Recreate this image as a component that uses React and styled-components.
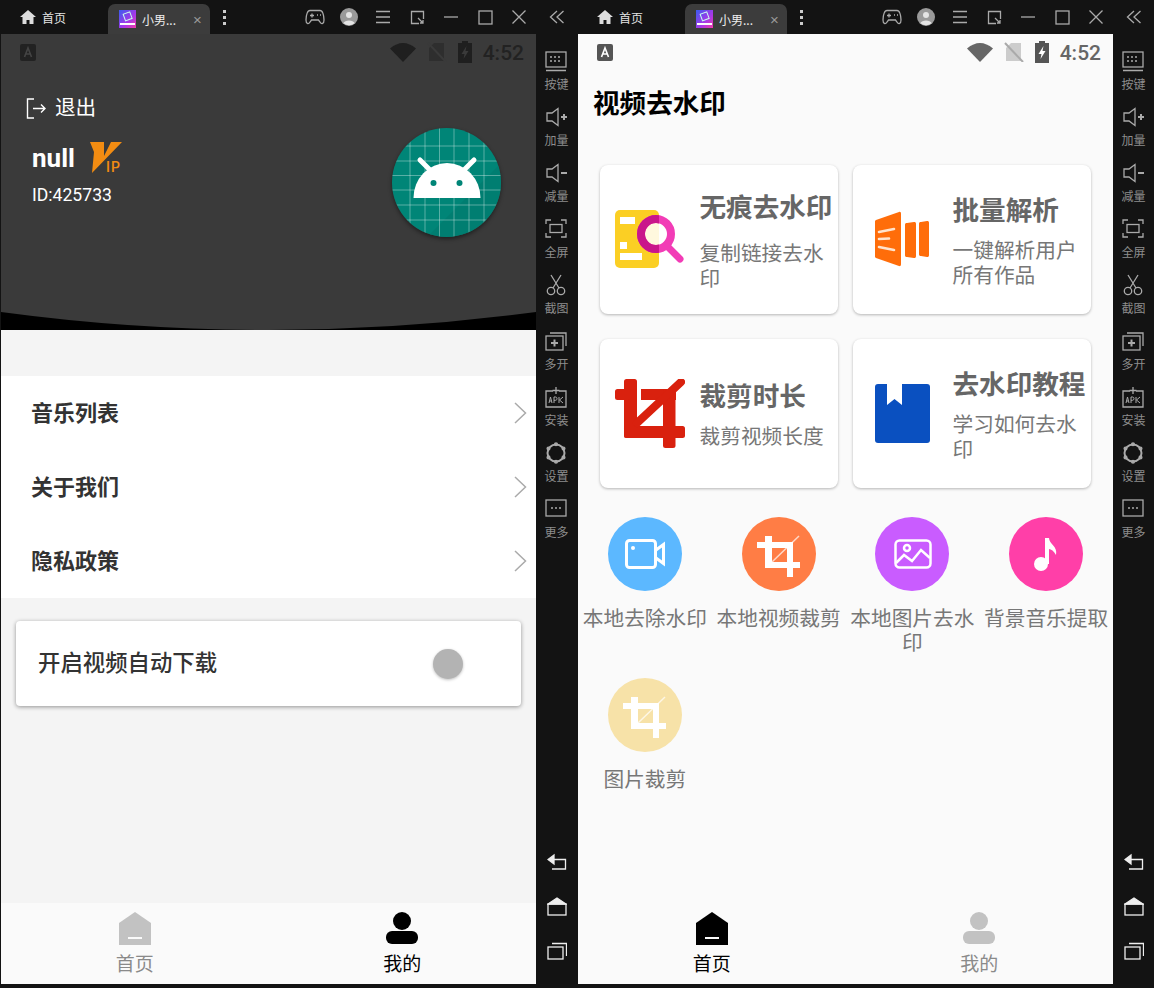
import React from 'react';
import styled, { createGlobalStyle } from 'styled-components';

const GlobalStyle = createGlobalStyle`
    html, body {
        margin: 0;
        padding: 0;
        background: #131313;
        overflow: hidden;
    }
    * {
        box-sizing: border-box;
    }
`

const cjk = `"Noto Sans CJK SC", "Noto Sans", sans-serif`

const Page = styled.div`
    display: flex;
    width: 1154px;
    height: 988px;
    font-family: ${cjk};
`

const Window = styled.section`
    width: 577px;
    height: 988px;
    display: flex;
    flex-direction: column;
    background: #131313;
`

const TitleBar = styled.header`
    height: 34px;
    flex: none;
    display: flex;
    align-items: center;
    color: #ddd;
`

const HomeTab = styled.div`
    width: 108px;
    padding-left: 20px;
    display: flex;
    align-items: center;
    gap: 6px;
    font-size: 12px;
    color: #e4e4e4;
`

const ActiveTab = styled.div`
    width: 102px;
    height: 30px;
    margin-top: 4px;
    padding-left: 11px;
    display: flex;
    align-items: center;
    gap: 6px;
    font-size: 12px;
    color: #eee;
    background: #3c3c3c;
    border-radius: 7px 7px 0 0;
`

const TabName = styled.span`
    width: 45px;
`

const TabClose = styled.span`
    font-size: 15px;
    line-height: 1;
    color: #999;
    font-family: "Liberation Sans", sans-serif;
`

const Dots = styled.div`
    width: 28px;
    display: flex;
    flex-direction: column;
    align-items: center;
    gap: 3px;
    span {
        width: 3px;
        height: 3px;
        background: #ccc;
    }
`

const WinControls = styled.div`
    margin-left: auto;
    display: flex;
    width: 238px;
`

const WinButton = styled.div`
    width: 34px;
    height: 34px;
    display: flex;
    align-items: center;
    justify-content: center;
`

const CollapseCell = styled.div`
    width: 41px;
    height: 34px;
    display: flex;
    align-items: center;
    justify-content: center;
`

const Body = styled.div`
    flex: 1;
    min-height: 0;
    display: flex;
    padding-left: 1px;
`

const Phone = styled.main`
    width: 535px;
    height: 950px;
    display: flex;
    flex-direction: column;
    background: ${p => p.$bg};
`

const Rail = styled.aside`
    width: 41px;
    padding: 16px 0 27px;
    display: flex;
    flex-direction: column;
    justify-content: space-between;
    align-items: center;
`

const RailTools = styled.div`
    display: flex;
    flex-direction: column;
    align-items: center;
`

const RailTool = styled.div`
    height: 56px;
    display: flex;
    flex-direction: column;
    align-items: center;
    gap: 4px;
    font-size: 12px;
    line-height: 16px;
    color: #8d8d8d;
`

const RailNav = styled.div`
    display: flex;
    flex-direction: column;
    align-items: center;
    gap: 24px;
`

const StatusBar = styled.div`
    height: 36px;
    flex: none;
    padding: 0 12px 0 19px;
    display: flex;
    align-items: center;
    color: ${p => p.$color};
`

const StatusIcons = styled.div`
    margin-left: auto;
    display: flex;
    align-items: center;
    gap: 11px;
`

const Clock = styled.span`
    padding-top: 3px;
    font-family: Roboto, sans-serif;
    font-weight: 500;
    font-size: 21px;
    line-height: 33px;
`

const BottomNav = styled.nav`
    height: 81px;
    flex: none;
    margin-top: auto;
    display: flex;
    background: #fafafa;
`

const NavItem = styled.div`
    flex: 1;
    padding-top: 9px;
    display: flex;
    flex-direction: column;
    align-items: center;
    gap: 4px;
    font-size: 19px;
    line-height: 28px;
    color: ${p => (p.$active ? '#000' : '#8a8a8a')};
`

/* my page */
const Header = styled.div`
    flex: none;
    background: #3a3a3a;
`

const HeaderMain = styled.div`
    height: 242px;
    padding: 23px 35px 0 25px;
    display: flex;
    justify-content: space-between;
    align-items: flex-start;
    color: #fff;
`

const Logout = styled.div`
    height: 30px;
    display: flex;
    align-items: center;
    gap: 8px;
    font-size: 20.6px;
    line-height: 26px;
    span {
        padding-bottom: 4px;
    }
`

const NameRow = styled.div`
    margin: 19px 0 0 6px;
    display: flex;
    align-items: center;
    gap: 14px;
    height: 31px;
`

const Name = styled.span`
    font-family: Roboto, sans-serif;
    font-weight: 700;
    font-size: 26px;
`

const UserId = styled.div`
    margin: 11px 0 0 6px;
    font-family: Roboto, sans-serif;
    font-size: 17.6px;
    line-height: 22px;
`

const Avatar = styled.svg`
    width: 109px;
    height: 109px;
    margin-top: 35px;
    border-radius: 50%;
    box-shadow: 0 2px 4px rgba(0, 0, 0, 0.45);
`

const Curve = styled.svg`
    display: block;
    width: 535px;
    height: 18px;
`

const MenuList = styled.div`
    margin-top: 46px;
    background: #fff;
`

const MenuRow = styled.div`
    height: 74px;
    padding: 0 9px 0 30px;
    display: flex;
    align-items: center;
    justify-content: space-between;
    font-size: 22px;
    font-weight: 700;
    color: #333;
    span {
        padding-bottom: 4px;
    }
`

const SwitchCard = styled.div`
    height: 85px;
    margin: 23px 15px 0;
    padding: 0 58px 0 22px;
    display: flex;
    align-items: center;
    justify-content: space-between;
    background: #fff;
    border-radius: 4px;
    box-shadow: 0 1px 4px rgba(0, 0, 0, 0.4);
    font-size: 22.4px;
    font-weight: 500;
    color: #333;
    span:first-child {
        padding-bottom: 5px;
    }
`

const Thumb = styled.i`
    width: 30px;
    height: 30px;
    border-radius: 50%;
    background: #b3b3b3;
    box-shadow: 0 1px 3px rgba(0, 0, 0, 0.25);
`

/* home page */
const PageTitle = styled.h1`
    margin: 14px 0 0 15px;
    font-size: 26.6px;
    line-height: 36px;
    font-weight: 700;
    color: #000;
`

const CardGrid = styled.div`
    margin: 45px 0 0 22px;
    display: grid;
    grid-template-columns: 238px 238px;
    grid-auto-rows: 149px;
    column-gap: 15px;
    row-gap: 25px;
`

const Card = styled.div`
    padding: 0 4px 0 15px;
    display: flex;
    align-items: center;
    gap: 15px;
    background: #fff;
    border-radius: 8px;
    box-shadow: 0 1px 3px rgba(0, 0, 0, 0.28);
`

const CardIcon = styled.svg`
    width: 70px;
    height: 70px;
    flex: none;
`

const CardText = styled.div`
    flex: 1;
    min-width: 0;
`

const CardTitle = styled.div`
    font-size: 26.6px;
    line-height: 32px;
    font-weight: 700;
    color: #666;
    white-space: nowrap;
    margin: 0 0 ${p => p.$gap}px -0.5px;
`

const CardSub = styled.div`
    font-size: 20.7px;
    line-height: 24.5px;
    color: #777;
    margin-left: -0.5px;
`

const ToolGrid = styled.div`
    margin-top: 29px;
    display: grid;
    grid-template-columns: repeat(4, 1fr);
    row-gap: 24px;
`

const Tool = styled.div`
    display: flex;
    flex-direction: column;
    align-items: center;
    gap: 14px;
    text-align: center;
    font-size: 20.7px;
    line-height: 24px;
    color: #777;
    min-height: 137px;
`

const ToolCircle = styled.div`
    width: 74px;
    height: 74px;
    flex: none;
    border-radius: 50%;
    background: ${p => p.$color};
    svg {
        display: block;
    }
`

/* icons */
const Stroke = ({ w = 24, h = 24, children, color = '#aaa', sw = 1.3 }) => (
    <svg width={w} height={h} viewBox={`0 0 ${w} ${h}`} fill="none" stroke={color} strokeWidth={sw}>
        {children}
    </svg>
)

const HomeGlyph = () => (
    <svg width="16" height="14" viewBox="0 0 16 14">
        <path d="M8 0L16 7H13.5V14H9.5V10H6.5V14H2.5V7H0Z" fill="#ddd" />
    </svg>
)

const TabLogo = () => (
    <svg width="17" height="18" viewBox="0 0 17 18">
        <defs>
            <linearGradient id="tablogo" x1="0" y1="0" x2="1" y2="1">
                <stop offset="0" stopColor="#3a5cf0" />
                <stop offset="0.6" stopColor="#a838e8" />
                <stop offset="1" stopColor="#f03ca8" />
            </linearGradient>
        </defs>
        <rect width="17" height="18" fill="url(#tablogo)" />
        <rect x="5" y="3" width="7" height="7" fill="none" stroke="#cfe" strokeWidth="1" transform="rotate(-20 8 6)" />
        <rect x="1" y="13" width="15" height="2" fill="#fff" />
    </svg>
)

const Gamepad = () => (
    <Stroke w="20" h="16">
        <path d="M5 1.5H15C17.5 1.5 19 6 19 11C19 15 16.5 15.5 15 13L13.5 11H6.5L5 13C3.5 15.5 1 15 1 11C1 6 2.5 1.5 5 1.5Z" />
        <path d="M5 6.5H9M7 4.5V8.5M12 6H13M15 6H16" />
    </Stroke>
)

const AccountDot = () => (
    <svg width="18" height="18" viewBox="0 0 18 18">
        <circle cx="9" cy="9" r="9" fill="#9a9a9a" />
        <circle cx="9" cy="7" r="3" fill="#e4e4e4" />
        <path d="M3.5 15C4.5 11.5 13.5 11.5 14.5 15C11.5 18 6.5 18 3.5 15Z" fill="#e4e4e4" />
    </svg>
)

const MenuLines = () => (
    <Stroke w="16" h="14">
        <path d="M1 1.5H15M1 7H15M1 12.5H15" />
    </Stroke>
)

const ResizeBox = () => (
    <Stroke w="15" h="15">
        <path d="M9 13.5H1.5V1.5H13.5V9" />
        <path d="M8 8L13 13M13 10V13H10" />
    </Stroke>
)

const MinLine = () => (
    <Stroke w="16" h="4">
        <path d="M1 2H15" />
    </Stroke>
)

const MaxBox = () => (
    <Stroke w="15" h="15">
        <rect x="1" y="1" width="13" height="13" />
    </Stroke>
)

const CloseX = () => (
    <Stroke w="16" h="16">
        <path d="M1.5 1.5L14.5 14.5M14.5 1.5L1.5 14.5" />
    </Stroke>
)

const Chevrons = () => (
    <Stroke w="16" h="14">
        <path d="M8 1L1.5 7L8 13M14.5 1L8 7L14.5 13" />
    </Stroke>
)

const railIcons = {
    keys: (
        <>
            <rect x="2" y="2" width="20" height="15" />
            <path d="M6 7H8M10 7H12M14 7H16M6 11H8M10 11H12M14 11H16M2 20.5H22" />
        </>
    ),
    volUp: (
        <>
            <path d="M3 7H8L14 2.5V19.5L8 15H3Z" />
            <path d="M17 11H23M20 8V14" strokeWidth="2" />
        </>
    ),
    volDown: (
        <>
            <path d="M3 7H8L14 2.5V19.5L8 15H3Z" />
            <path d="M17 11H23" strokeWidth="2" />
        </>
    ),
    full: (
        <>
            <path d="M2 6V2H7M17 2H22V6M2 15V19H7M17 19H22V15" />
            <rect x="6" y="6.5" width="12" height="8" />
        </>
    ),
    cut: (
        <>
            <circle cx="7" cy="17" r="3.7" />
            <circle cx="17" cy="17" r="3.7" />
            <path d="M9 14L17 1M15 14L7 1" />
        </>
    ),
    multi: (
        <>
            <rect x="2" y="6" width="17" height="14" />
            <path d="M6 3H22V16" />
            <path d="M7 13H14M10.5 9.5V16.5" strokeWidth="2" />
        </>
    ),
    apk: (
        <>
            <path d="M9 5H2V21H22V5H15" />
            <path d="M12 1V8M8.5 4.5H15.5" />
            <path d="M5 17L6.5 11L8 17M5.6 15H7.4M10 17V11H11.5C13.5 11 13.5 14.3 11.5 14.3H10M15 11V17M19 11L15.5 14L19 17" strokeWidth="1" />
        </>
    ),
    gear: (
        <>
            <circle cx="12" cy="11" r="8.5" strokeWidth="2" />
            <circle cx="12" cy="2.300" r="1.4" fill="#aaa" />
            <circle cx="12" cy="19.700" r="1.4" fill="#aaa" />
            <circle cx="4.500" cy="6.600" r="1.4" fill="#aaa" />
            <circle cx="19.500" cy="6.600" r="1.4" fill="#aaa" />
            <circle cx="4.500" cy="15.400" r="1.4" fill="#aaa" />
            <circle cx="19.500" cy="15.400" r="1.4" fill="#aaa" />
        </>
    ),
    more: (
        <>
            <rect x="2" y="2" width="20" height="16" />
            <path d="M7 10H9M11 10H13M15 10H17" strokeWidth="1.6" />
        </>
    ),
}

const tools = [
    ['keys', '按键'],
    ['volUp', '加量'],
    ['volDown', '减量'],
    ['full', '全屏'],
    ['cut', '截图'],
    ['multi', '多开'],
    ['apk', '安装'],
    ['gear', '设置'],
    ['more', '更多'],
]

const SideRail = () => (
    <Rail>
        <RailTools>
            {tools.map(([icon, label]) => (
                <RailTool key={icon}>
                    <Stroke w="24" h="22">{railIcons[icon]}</Stroke>
                    <span>{label}</span>
                </RailTool>
            ))}
        </RailTools>
        <RailNav>
            <svg width="20" height="20" viewBox="0 0 20 20" fill="none" stroke="#eee" strokeWidth="1.3">
                <path d="M7 2L1 6.5L7 11Z" fill="#eee" />
                <path d="M7 6.5H18.5V16H5" />
            </svg>
            <svg width="20" height="20" viewBox="0 0 20 20" fill="none" stroke="#eee" strokeWidth="1.3">
                <path d="M1 7L10 1L19 7Z" fill="#eee" />
                <rect x="1" y="7" width="18" height="11" />
            </svg>
            <svg width="20" height="20" viewBox="0 0 20 20" fill="none" stroke="#eee" strokeWidth="1.3">
                <rect x="1" y="6" width="15" height="12" />
                <path d="M5 2.5H19.5V15" />
            </svg>
        </RailNav>
    </Rail>
)

const WindowTop = () => (
    <TitleBar>
        <HomeTab>
            <HomeGlyph />
            <span>首页</span>
        </HomeTab>
        <ActiveTab>
            <TabLogo />
            <TabName>小男...</TabName>
            <TabClose>×</TabClose>
        </ActiveTab>
        <Dots>
            <span />
            <span />
            <span />
        </Dots>
        <WinControls>
            <WinButton><Gamepad /></WinButton>
            <WinButton><AccountDot /></WinButton>
            <WinButton><MenuLines /></WinButton>
            <WinButton><ResizeBox /></WinButton>
            <WinButton><MinLine /></WinButton>
            <WinButton><MaxBox /></WinButton>
            <WinButton><CloseX /></WinButton>
        </WinControls>
        <CollapseCell><Chevrons /></CollapseCell>
    </TitleBar>
)

const Status = ({ color, box, letter, wifi, sim, slash, batt, bolt }) => (
    <StatusBar $color={color}>
        <svg width="16" height="17" viewBox="0 0 16 17">
            <rect width="16" height="17" rx="2" fill={box} />
            <path d="M4.5 13L8 4L11.5 13M5.8 10H10.2" fill="none" stroke={letter} strokeWidth="1.6" />
        </svg>
        <StatusIcons>
            <svg width="26" height="20" viewBox="0 0 26 20">
                <path d="M0 6.5Q13 -4.5 26 6.5L13 20Z" fill={wifi} />
            </svg>
            <svg width="20" height="20" viewBox="0 0 20 20">
                <path d="M7 1H17V19H2V6Z" fill={sim} />
                <path d="M1 1L19 20" stroke={slash} strokeWidth="2" />
            </svg>
            <svg width="14" height="22" viewBox="0 0 14 22">
                <path d="M4 0H10V2H14V22H0V2H4Z" fill={batt} />
                <path d="M8.5 5L3.5 13H6.5L5.5 18L10.5 10H7.5Z" fill={bolt} />
            </svg>
            <Clock>4:52</Clock>
        </StatusIcons>
    </StatusBar>
)

const HomeNavIcon = ({ color }) => (
    <svg width="32" height="33" viewBox="0 0 32 33">
        <path d="M16 0L32 11V33H0V11Z" fill={color} />
        <rect x="9" y="25" width="14" height="2" fill="#fafafa" />
    </svg>
)

const PersonNavIcon = ({ color }) => (
    <svg width="32" height="33" viewBox="0 0 32 33">
        <circle cx="16" cy="9" r="9" fill={color} />
        <rect x="0" y="19" width="32" height="13" rx="6" fill={color} />
    </svg>
)

const Tabs = ({ active }) => (
    <BottomNav>
        <NavItem $active={active === 'home'}>
            <HomeNavIcon color={active === 'home' ? '#000' : '#c2c2c2'} />
            <span>首页</span>
        </NavItem>
        <NavItem $active={active === 'me'}>
            <PersonNavIcon color={active === 'me' ? '#000' : '#c2c2c2'} />
            <span>我的</span>
        </NavItem>
    </BottomNav>
)

const AndroidAvatar = () => (
    <Avatar viewBox="0 0 109 109">
        <rect width="109" height="109" fill="#008577" />
        <path d="M109 35L35 109H109Z" fill="#00776b" opacity="0.5" />
        <path
            d="M18 0V109M33 0V109M47.500 0V109M62 0V109M77 0V109M92 0V109M0 18H109M0 33H109M0 47.500H109M0 62H109M0 77H109M0 92H109"
            stroke="#fff"
            strokeOpacity="0.35"
            strokeWidth="1"
        />
        <path d="M21.500 70A33.500 35 0 0 1 88.500 70Z" fill="#fff" />
        <path d="M28 32L39 43M82 32L71 43" stroke="#fff" strokeWidth="5" strokeLinecap="round" />
        <circle cx="41.500" cy="55" r="3" fill="#008577" />
        <circle cx="67.500" cy="55" r="3" fill="#008577" />
    </Avatar>
)

const VipMark = () => (
    <svg width="36" height="31" viewBox="0 0 36 31" overflow="visible">
        <path d="M1 0H15V14L22 0H33L3 31L5 10Z" fill="#f28c12" />
        <text x="17" y="30" fontFamily="Roboto, sans-serif" fontSize="14" fontWeight="500" letterSpacing="1" fill="#f28c12">IP</text>
    </svg>
)

const Chevron = () => (
    <Stroke w="14" h="24" color="#aaa" sw="1.5">
        <path d="M2 2L12.500 12L2 22" />
    </Stroke>
)

const MinePage = () => (
    <Phone $bg="#f4f4f4">
        <Header>
            <Status color="#222" box="#222" letter="#444" wifi="#1f1f1f" sim="#2e2e2e" slash="#3a3a3a" batt="#1f1f1f" bolt="#3a3a3a" />
            <HeaderMain>
                <div>
                    <Logout>
                        <svg width="21" height="21" viewBox="0 0 21 21" fill="none" stroke="#fff" strokeWidth="1.4">
                            <path d="M8 1H1.500V20H8" />
                            <path d="M7 10.500H19M15 6.500L19 10.500L15 14.500" />
                        </svg>
                        <span>退出</span>
                    </Logout>
                    <NameRow>
                        <Name>null</Name>
                        <VipMark />
                    </NameRow>
                    <UserId>ID:425733</UserId>
                </div>
                <AndroidAvatar />
            </HeaderMain>
            <Curve viewBox="0 0 535 18">
                <path d="M0 0Q267.500 36 535 0V18H0Z" fill="#000" />
            </Curve>
        </Header>
        <MenuList>
            <MenuRow><span>音乐列表</span><Chevron /></MenuRow>
            <MenuRow><span>关于我们</span><Chevron /></MenuRow>
            <MenuRow><span>隐私政策</span><Chevron /></MenuRow>
        </MenuList>
        <SwitchCard>
            <span>开启视频自动下载</span>
            <Thumb />
        </SwitchCard>
        <Tabs active="me" />
    </Phone>
)

const SearchDocIcon = () => (
    <CardIcon viewBox="0 0 70 70">
        <defs>
            <clipPath id="docclip">
                <rect x="0" y="5" width="44" height="58" rx="5" />
            </clipPath>
        </defs>
        <rect x="0" y="5" width="44" height="58" rx="5" fill="#fbcf24" />
        <path d="M5 12H20V19H5ZM5 37H12V44H5ZM5 48H27V55H5Z" fill="#fff" />
        <path d="M52 41L65 54" stroke="#f23cb6" strokeWidth="7" strokeLinecap="round" />
        <circle cx="41" cy="29" r="15" fill="#fff" fillOpacity="0.85" stroke="#f23cb6" strokeWidth="8" />
        <circle cx="41" cy="29" r="15" fill="none" stroke="#c9168b" strokeWidth="8" clipPath="url(#docclip)" />
    </CardIcon>
)

const BatchIcon = () => (
    <CardIcon viewBox="0 0 70 70">
        <path d="M8 15L31 7C32.500 6.500 33 7.500 33 9V59C33 60.500 32.500 61.500 31 61L8 53C7 52.500 7 52 7 51V17C7 16 7 15.500 8 15Z" fill="#ff6d0a" />
        <path d="M39 18L46 17C47.500 17 48 17.500 48 19V51C48 52.500 47.500 53 46 53L39 52C37.500 52 37 51.500 37 50V20C37 18.500 37.500 18 39 18Z" fill="#ff6d0a" />
        <path d="M53 17L59 16C60.500 16 61 16.500 61 18V50C61 51.500 60.500 52 59 52L53 51C51.500 51 51 50.500 51 49V19C51 17.500 51.500 17 53 17Z" fill="#ff6d0a" />
        <path d="M11 27L26 24M11 34L21 33.500M11 42L26 45" stroke="#ffe3cc" strokeWidth="2.600" strokeLinecap="round" />
    </CardIcon>
)

const RedCropIcon = () => (
    <CardIcon viewBox="0 0 70 70">
        <g fill="#d9210e">
            <rect x="9" y="0" width="13" height="59" rx="2.500" />
            <rect x="0" y="10" width="16" height="11" rx="2.500" />
            <rect x="26" y="10" width="35" height="11" />
            <rect x="48" y="10" width="12.500" height="59" rx="2.500" />
            <rect x="9" y="47" width="61" height="12" rx="2.500" />
        </g>
        <path d="M22 44L66 3" stroke="#d9210e" strokeWidth="8" strokeLinecap="round" />
    </CardIcon>
)

const BookIcon = () => (
    <CardIcon viewBox="0 0 70 70">
        <rect x="7" y="5" width="55" height="59" rx="3" fill="#0a50c0" />
        <path d="M19 5H34V26L26.500 20L19 26Z" fill="#fff" />
    </CardIcon>
)

const CropGlyph = () => (
    <svg width="74" height="74" viewBox="0 0 74 74">
        <g fill="#fff">
            <rect x="23" y="19" width="7" height="32" />
            <rect x="15" y="25" width="36" height="6" />
            <rect x="45" y="25" width="6" height="35" />
            <rect x="23" y="45" width="35" height="6" />
        </g>
        <path d="M30 45L57 19" stroke="#fff" strokeOpacity="0.7" strokeWidth="1.500" />
    </svg>
)

const VideoGlyph = () => (
    <svg width="74" height="74" viewBox="0 0 74 74" fill="none" stroke="#fff" strokeWidth="3">
        <rect x="18.500" y="23.500" width="29" height="27" rx="3" />
        <path d="M48 33L55.500 27.500V46.500L48 41" />
        <circle cx="25" cy="31" r="2" fill="#fff" stroke="none" />
    </svg>
)

const PictureGlyph = () => (
    <svg width="74" height="74" viewBox="0 0 74 74" fill="none" stroke="#fff" strokeWidth="2.500">
        <rect x="20.500" y="23.500" width="35" height="27" rx="4" />
        <circle cx="32" cy="31" r="3" />
        <path d="M21 46L29 38L37 44L46 33L55 41" />
    </svg>
)

const MusicGlyph = () => (
    <svg width="74" height="74" viewBox="0 0 74 74">
        <circle cx="32" cy="47" r="7" fill="#fff" />
        <path d="M36 47V21H40C40 27 49 29 47 38C45 34 42 32 40 32V47Z" fill="#fff" />
    </svg>
)

const HomePage = () => (
    <Phone $bg="#fafafa">
        <Status color="#666" box="#555" letter="#fff" wifi="#666" sim="#ccc" slash="#aaa" batt="#555" bolt="#fff" />
        <PageTitle>视频去水印</PageTitle>
        <CardGrid>
            <Card>
                <SearchDocIcon />
                <CardText>
                    <CardTitle $gap={18}>无痕去水印</CardTitle>
                    <CardSub>复制链接去水印</CardSub>
                </CardText>
            </Card>
            <Card>
                <BatchIcon />
                <CardText>
                    <CardTitle $gap={12}>批量解析</CardTitle>
                    <CardSub>一键解析用户所有作品</CardSub>
                </CardText>
            </Card>
            <Card>
                <RedCropIcon />
                <CardText>
                    <CardTitle $gap={12}>裁剪时长</CardTitle>
                    <CardSub>裁剪视频长度</CardSub>
                </CardText>
            </Card>
            <Card>
                <BookIcon />
                <CardText>
                    <CardTitle $gap={12}>去水印教程</CardTitle>
                    <CardSub>学习如何去水印</CardSub>
                </CardText>
            </Card>
        </CardGrid>
        <ToolGrid>
            <Tool>
                <ToolCircle $color="#5cb8ff"><VideoGlyph /></ToolCircle>
                本地去除水印
            </Tool>
            <Tool>
                <ToolCircle $color="#ff7d45"><CropGlyph /></ToolCircle>
                本地视频裁剪
            </Tool>
            <Tool>
                <ToolCircle $color="#c95cff"><PictureGlyph /></ToolCircle>
                本地图片去水印
            </Tool>
            <Tool>
                <ToolCircle $color="#ff3fa8"><MusicGlyph /></ToolCircle>
                背景音乐提取
            </Tool>
            <Tool>
                <ToolCircle $color="#f7e2a8"><CropGlyph /></ToolCircle>
                图片裁剪
            </Tool>
        </ToolGrid>
        <Tabs active="home" />
    </Phone>
)

const App = () => (
    <Page>
        <GlobalStyle />
        <Window>
            <WindowTop />
            <Body>
                <MinePage />
                <SideRail />
            </Body>
        </Window>
        <Window>
            <WindowTop />
            <Body>
                <HomePage />
                <SideRail />
            </Body>
        </Window>
    </Page>
)

export default App
